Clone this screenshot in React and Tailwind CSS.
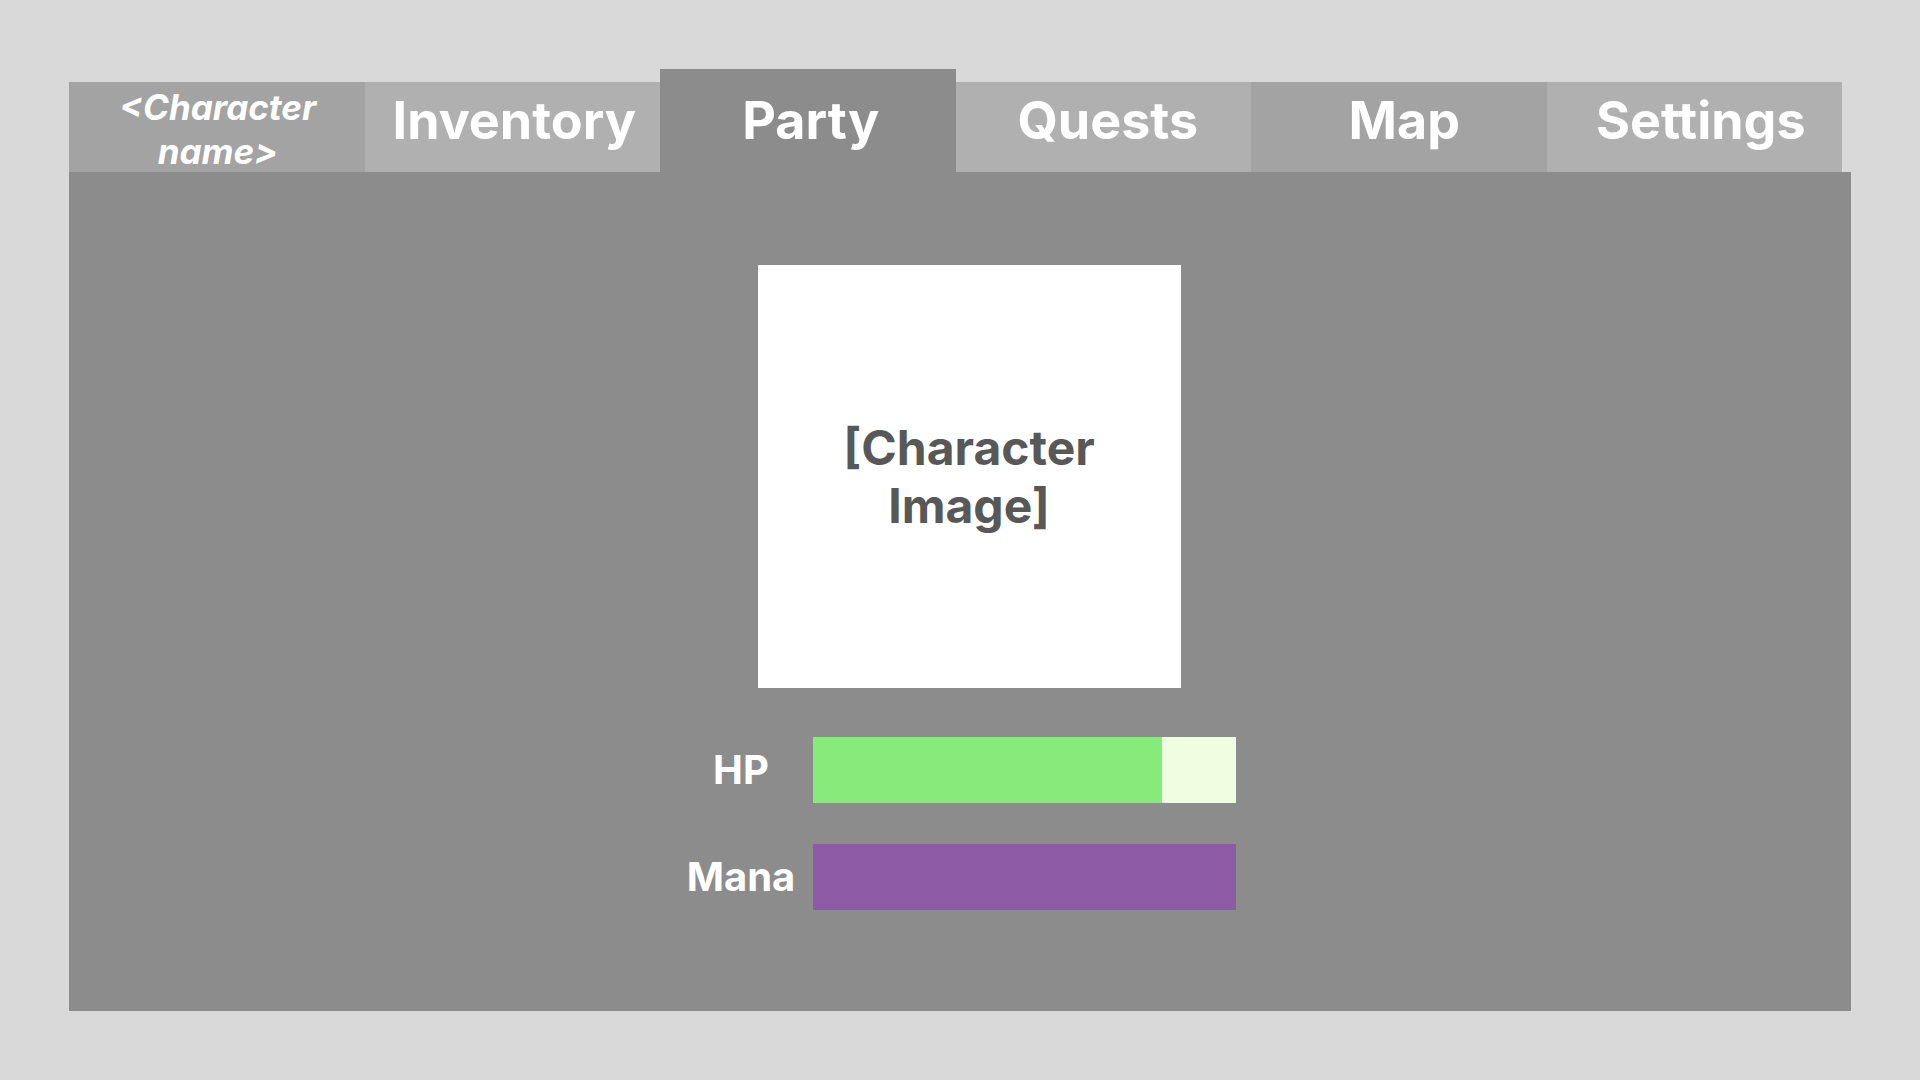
const TABS = [
  { id: "character", label: ["<Character", "name>"], tone: "bg-[#a3a3a3]", nudge: "pl-[2px]" },
  { id: "inventory", label: "Inventory", tone: "bg-[#b0b0b0]", nudge: "pl-[4px]" },
  { id: "party", label: "Party", tone: "bg-[#8c8c8c]", nudge: "pl-[6px]" },
  { id: "quests", label: "Quests", tone: "bg-[#b0b0b0]", nudge: "pl-[9px]" },
  { id: "map", label: "Map", tone: "bg-[#a3a3a3]", nudge: "pl-[11px]" },
  { id: "settings", label: "Settings", tone: "bg-[#b0b0b0]", nudge: "pl-[13px]" },
];

const ACTIVE_TAB = "party";

const STATS = [
  { name: "HP", value: 82.5, fill: "bg-[#86eb7a]", track: "bg-[#effde0]" },
  { name: "Mana", value: 100, fill: "bg-[#8d5aa5]", track: "bg-[#8d5aa5]" },
];

function Tab({ tab }) {
  const isActive = tab.id === ACTIVE_TAB;

  if (Array.isArray(tab.label)) {
    return (
      <div
        className={`flex h-[90px] items-center justify-center pt-[4px] ${tab.tone} ${tab.nudge}`}
      >
        <span className="text-center text-[35px] font-bold italic leading-[44px] text-white">
          {tab.label[0]}
          <br />
          {tab.label[1]}
        </span>
      </div>
    );
  }

  return (
    <div
      className={`flex items-end justify-center pb-[25px] ${tab.tone} ${tab.nudge} ${
        isActive ? "h-[103px]" : "h-[90px]"
      }`}
    >
      <span className="text-[52px] font-bold leading-[52px] text-white">
        {tab.label}
      </span>
    </div>
  );
}

function StatBar({ stat }) {
  return (
    <div className={`flex h-[66px] w-[423px] ${stat.track}`}>
      <div className={`h-full ${stat.fill}`} style={{ width: `${stat.value}%` }} />
    </div>
  );
}

export default function App() {
  return (
    <div
      className="min-h-screen bg-[#d9d9d9] pl-[69px] pt-[69px]"
      style={{ fontFamily: "Inter, 'Noto Sans', sans-serif" }}
    >
      {/* tabs */}
      <nav className="grid h-[103px] w-[1773px] grid-cols-6 items-end">
        {TABS.map((tab) => (
          <Tab key={tab.id} tab={tab} />
        ))}
      </nav>

      {/* party panel */}
      <main className="flex h-[839px] w-[1782px] flex-col items-center bg-[#8c8c8c] pt-[93px]">
        <div className="ml-[18px] flex h-[423px] w-[423px] items-center justify-center bg-white">
          <p className="text-center text-[48px] font-bold leading-[58px] text-[#585858]">
            [Character
            <br />
            Image]
          </p>
        </div>

        <div className="ml-[3px] mt-[49px] grid grid-cols-[auto_423px] items-center gap-x-[18px] gap-y-[41px]">
          {STATS.map((stat) => (
            <div key={stat.name} className="contents">
              <span className="text-center text-[40px] font-bold leading-none text-white">
                {stat.name}
              </span>
              <StatBar stat={stat} />
            </div>
          ))}
        </div>
      </main>
    </div>
  );
}
